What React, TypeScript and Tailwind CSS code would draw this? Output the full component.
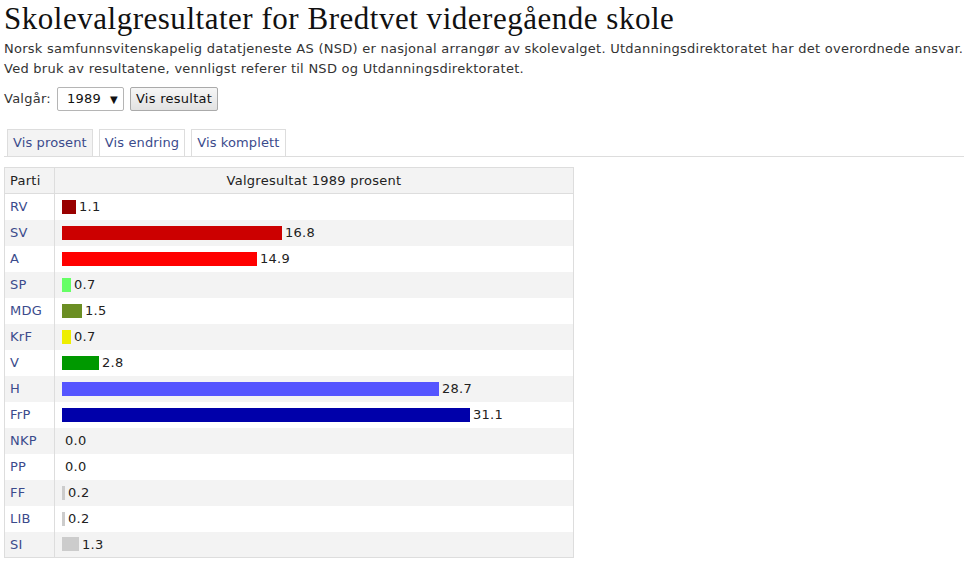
const rows: { party: string; value: number; color: string }[] = [
  { party: "RV", value: 1.1, color: "#990000" },
  { party: "SV", value: 16.8, color: "#cc0000" },
  { party: "A", value: 14.9, color: "#ff0000" },
  { party: "SP", value: 0.7, color: "#66ff66" },
  { party: "MDG", value: 1.5, color: "#6b8e23" },
  { party: "KrF", value: 0.7, color: "#eeee00" },
  { party: "V", value: 2.8, color: "#009900" },
  { party: "H", value: 28.7, color: "#5555ff" },
  { party: "FrP", value: 31.1, color: "#0000aa" },
  { party: "NKP", value: 0.0, color: "#cccccc" },
  { party: "PP", value: 0.0, color: "#cccccc" },
  { party: "FF", value: 0.2, color: "#cccccc" },
  { party: "LIB", value: 0.2, color: "#cccccc" },
  { party: "SI", value: 1.3, color: "#cccccc" },
];

const SCALE = 408 / 31.1;

export default function App() {
  return (
    <div className="min-h-[570px] bg-white px-1 pr-[7px] font-['DejaVu_Sans',Verdana,sans-serif] text-[13px] tracking-[0.26px] text-[#333]">
      <h1 className="pt-[1px] font-['Liberation_Serif',Georgia,serif] text-[31px] leading-[36px] tracking-[0.52px] text-[#111]">
        Skolevalgresultater for Bredtvet videregående skole
      </h1>
      <p className="mt-[2px] leading-[20px]">
        Norsk samfunnsvitenskapelig datatjeneste AS (NSD) er nasjonal arrangør av skolevalget. Utdanningsdirektoratet har det overordnede ansvar.
        Ved bruk av resultatene, vennligst referer til NSD og Utdanningsdirektoratet.
      </p>

      <div className="mt-[8px] flex items-center gap-[6px]">
        <span>Valgår:</span>
        <div className="flex h-[24px] w-[67px] items-center justify-between rounded-[2px] border border-[#b5b5b5] bg-white pl-[9px] pr-[5px] text-[#111]">
          <span>1989</span>
          <span className="text-[10px]">▼</span>
        </div>
        <button className="h-[24px] rounded-[2px] border border-[#aaa] bg-gradient-to-b from-[#f6f6f6] to-[#e2e2e2] px-[5px] text-[#111]">
          Vis resultat
        </button>
      </div>

      <div className="mt-[18px] flex gap-[6px] border-b border-[#ddd] pl-[3px] tracking-[0.12px]">
        <span className="border border-b-0 border-[#ddd] bg-[#f3f3f3] px-[5px] py-[4px] leading-[18px] text-[#3b4b8c]">Vis prosent</span>
        <span className="border border-b-0 border-[#ddd] px-[5px] py-[4px] leading-[18px] text-[#3b4b8c]">Vis endring</span>
        <span className="border border-b-0 border-[#ddd] px-[5px] py-[4px] leading-[18px] text-[#3b4b8c]">Vis komplett</span>
      </div>

      <table className="mt-[10px] w-[570px] border-collapse border border-[#ddd]">
        <thead>
          <tr className="h-[26px] bg-[#f3f3f3] text-[#222]">
            <th className="w-[50px] border-r border-b border-[#ddd] px-[5px] text-left font-normal">Parti</th>
            <th className="border-b border-[#ddd] font-normal">Valgresultat 1989 prosent</th>
          </tr>
        </thead>
        <tbody>
          {rows.map((r, i) => (
            <tr key={r.party} className={`h-[26px] ${i % 2 === 1 ? "bg-[#f3f3f3]" : "bg-white"}`}>
              <td className="border-r border-[#ddd] px-[5px] text-[#3b4b8c]">{r.party}</td>
              <td className="pl-[7px]">
                <div className="flex items-center gap-[3px] text-[#222]">
                  <span className="inline-block h-[14px]" style={{ width: Math.round(r.value * SCALE), backgroundColor: r.color }} />
                  <span>{r.value.toFixed(1)}</span>
                </div>
              </td>
            </tr>
          ))}
        </tbody>
      </table>
    </div>
  );
}
